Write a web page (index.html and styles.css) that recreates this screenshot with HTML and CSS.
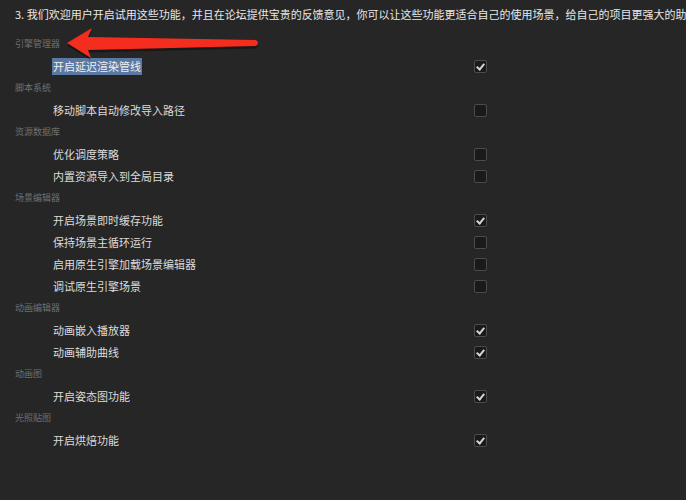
FILE: index.html
```html
<!DOCTYPE html>
<html lang="zh-CN">
<head>
<meta charset="utf-8">
<link rel="stylesheet" href="styles.css">
</head>
<body>
<div class="page">
  <p class="intro">3. 我们欢迎用户开启试用这些功能，并且在论坛提供宝贵的反馈意见，你可以让这些功能更适合自己的使用场景，给自己的项目更强大的助力。</p>
  <div class="list">
    <div class="group">引擎管理器</div>
    <div class="item"><span class="label"><span class="sel">开启延迟渲染管线</span></span><span class="cb on"></span></div>
    <div class="group">脚本系统</div>
    <div class="item"><span class="label">移动脚本自动修改导入路径</span><span class="cb"></span></div>
    <div class="group">资源数据库</div>
    <div class="item"><span class="label">优化调度策略</span><span class="cb"></span></div>
    <div class="item"><span class="label">内置资源导入到全局目录</span><span class="cb"></span></div>
    <div class="group">场景编辑器</div>
    <div class="item"><span class="label">开启场景即时缓存功能</span><span class="cb on"></span></div>
    <div class="item"><span class="label">保持场景主循环运行</span><span class="cb"></span></div>
    <div class="item"><span class="label">启用原生引擎加载场景编辑器</span><span class="cb"></span></div>
    <div class="item"><span class="label">调试原生引擎场景</span><span class="cb"></span></div>
    <div class="group">动画编辑器</div>
    <div class="item"><span class="label">动画嵌入播放器</span><span class="cb on"></span></div>
    <div class="item"><span class="label">动画辅助曲线</span><span class="cb on"></span></div>
    <div class="group">动画图</div>
    <div class="item"><span class="label">开启姿态图功能</span><span class="cb on"></span></div>
    <div class="group">光照贴图</div>
    <div class="item"><span class="label">开启烘焙功能</span><span class="cb on"></span></div>
  </div>
  <svg class="arrow" width="270" height="70" viewBox="0 0 270 70" aria-hidden="true">
    <path d="M67 44 L92 29 L88 38 L256 41 Q260 44 256 47 L88 51 L91 59 Z" fill="#000" opacity="0.35" transform="translate(0 1.5)"/>
    <path d="M67 43 L92 28 L88 37 L256 40 Q260 43 256 46 L88 50 L91 58 Z" fill="#f52d1e"/>
  </svg>
</div>
</body>
</html>
```
FILE: styles.css
```css
html, body {
  margin: 0;
  padding: 0;
  background: #262626;
}
.page {
  position: relative;
  width: 686px;
  height: 500px;
  overflow: hidden;
  font-family: "Noto Sans CJK SC", "Noto Sans", sans-serif;
}
.intro {
  margin: 0;
  padding: 6px 0 10px 15px;
  font-size: 11px;
  line-height: 17px;
  color: #e8e8e8;
  white-space: nowrap;
}
.list {
  display: flex;
  flex-direction: column;
}
.group {
  height: 22px;
  line-height: 22px;
  padding-left: 15px;
  font-size: 9px;
  color: #707070;
}
.item {
  height: 22px;
  display: grid;
  grid-template-columns: 421px 13px;
  align-items: center;
  padding-left: 53px;
}
.label {
  font-size: 11px;
  line-height: 17px;
  color: #dcdcdc;
}
.sel {
  display: inline-block;
  background: #5a78a2;
  color: #f0f0f0;
  margin-left: -1px;
  padding: 0 1px;
}
.cb {
  position: relative;
  width: 11px;
  height: 11px;
  border: 1px solid #4b4b4b;
  border-radius: 2px;
  background: #1a1a1a;
}
.cb.on::after {
  content: "";
  position: absolute;
  left: 3px;
  top: 1px;
  width: 3px;
  height: 6px;
  border: solid #d4d4d4;
  border-width: 0 2px 2px 0;
  transform: rotate(40deg);
}
.arrow {
  position: absolute;
  left: 0;
  top: 0;
}
```
